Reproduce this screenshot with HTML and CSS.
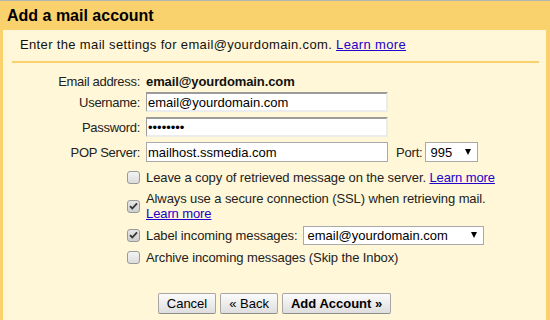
FILE: index.html
```html
<!DOCTYPE html>
<html lang="en">

<head>
    <meta charset="UTF-8">
    <meta name="viewport" content="width=device-width, initial-scale=1.0">
    <title>Add a mail account</title>
    <link rel="stylesheet" href="styles.css">
</head>

<body>
    <div class="dialog">
        <h1 class="dialog-title">Add a mail account</h1>
        <div class="dialog-body">
            <p class="intro">Enter the mail settings for email@yourdomain.com. <a href="#">Learn more</a></p>

            <div class="settings">
                <div class="row row-email">
                    <span class="row-label">Email address:</span>
                    <b>email@yourdomain.com</b>
                </div>
                <div class="row">
                    <label class="row-label" for="username">Username:</label>
                    <input type="text" id="username" class="field field-inset" value="email@yourdomain.com">
                </div>
                <div class="row">
                    <label class="row-label" for="password">Password:</label>
                    <input type="password" id="password" class="field field-inset" value="password">
                </div>
                <div class="row">
                    <label class="row-label" for="popServer">POP Server:</label>
                    <input type="text" id="popServer" class="field" value="mailhost.ssmedia.com">
                    <label class="port-label" for="port">Port:</label>
                    <span class="select-wrap select-port">
                        <select id="port">
                            <option selected>995</option>
                            <option>110</option>
                        </select>
                    </span>
                </div>

                <div class="option option-first">
                    <span class="box"></span>
                    <span class="option-text">Leave a copy of retrieved message on the server. <a href="#">Learn more</a></span>
                </div>
                <div class="option option-tall">
                    <span class="box checked">
                        <svg width="9" height="8" viewBox="0 0 9 8"><path d="M1 4.2 L3.3 6.5 L8 1.3" fill="none" stroke="#333" stroke-width="1.8"/></svg>
                    </span>
                    <span class="option-text">Always use a secure connection (SSL) when retrieving mail. <a href="#">Learn more</a></span>
                </div>
                <div class="option">
                    <span class="box checked">
                        <svg width="9" height="8" viewBox="0 0 9 8"><path d="M1 4.2 L3.3 6.5 L8 1.3" fill="none" stroke="#333" stroke-width="1.8"/></svg>
                    </span>
                    <span class="option-text">Label incoming messages:</span>
                    <span class="select-wrap select-label">
                        <select>
                            <option selected>email@yourdomain.com</option>
                        </select>
                    </span>
                </div>
                <div class="option">
                    <span class="box"></span>
                    <span class="option-text">Archive incoming messages (Skip the Inbox)</span>
                </div>
            </div>

            <div class="actions">
                <button>Cancel</button>
                <button>&laquo; Back</button>
                <button class="primary">Add Account &raquo;</button>
            </div>
        </div>
    </div>
</body>

</html>
```

FILE: styles.css
```css
body {
    margin: 0;
    font-family: "Liberation Sans", Arial, sans-serif;
    font-size: 13px;
    color: #222;
    background-color: #f9d16d;
}

.dialog {
    border-top: 1px solid #b4b4b4;
    padding: 0 4px 0 3px;
    min-height: 319px;
    display: flex;
    flex-direction: column;
}

.dialog-title {
    margin: 0;
    padding-left: 4px;
    height: 29px;
    line-height: 29px;
    font-size: 16px;
    font-weight: bold;
    color: #000;
}

.dialog-body {
    flex: 1;
    background-color: #fff7d7;
}

.intro {
    margin: 0 7px 0 9px;
    padding: 7px 0 8px 8px;
    line-height: 16px;
    letter-spacing: 0.35px;
    border-bottom: 2px solid #f9d16d;
    color: #111;
}

a {
    color: #2200cc;
}

.settings {
    padding: 8px 40px 0 0;
}

.row {
    display: flex;
    align-items: center;
    height: 20px;
    margin-bottom: 5px;
}

.row-email {
    margin-bottom: 1px;
}

.row-label {
    width: 137px;
    margin-right: 6px;
    text-align: right;
    letter-spacing: -0.3px;
    flex-shrink: 0;
}

.row-email b {
    color: #111;
    letter-spacing: -0.1px;
}

.field {
    width: 242px;
    height: 20px;
    box-sizing: border-box;
    margin: 0;
    padding: 0 1px;
    font-family: inherit;
    font-size: 13px;
    color: #000;
    background: #fff;
    border: 1px solid #a9a9a9;
    outline: none;
}

.field-inset {
    border-width: 2px 2px 2px 1px;
    border-color: #9b9b9b #ececec #ececec #9b9b9b;
}

.port-label {
    margin: 0 3px 0 8px;
    letter-spacing: -0.2px;
}

.select-wrap {
    position: relative;
    display: inline-block;
}

.select-wrap select {
    appearance: none;
    -webkit-appearance: none;
    box-sizing: border-box;
    margin: 0;
    padding: 0 0 0 4px;
    font-family: inherit;
    font-size: 13px;
    color: #000;
    background: #fff;
    border: 1px solid #a9a9a9;
    border-radius: 0;
    outline: none;
}

.select-wrap::after {
    content: "";
    position: absolute;
    right: 7px;
    top: 50%;
    margin-top: -3px;
    border-left: 3.5px solid transparent;
    border-right: 3.5px solid transparent;
    border-top: 6px solid #000;
}

.select-port select {
    width: 53px;
    height: 20px;
}

.select-label {
    margin-left: 5px;
}

.select-label select {
    width: 181px;
    height: 19px;
}

.option {
    display: flex;
    align-items: center;
    height: 22px;
}

.option-first {
    margin-top: 4px;
    height: 21px;
}

.option-tall {
    height: 36px;
}

.option-text {
    line-height: 15px;
    letter-spacing: -0.1px;
}

.box {
    width: 13px;
    height: 13px;
    box-sizing: border-box;
    margin: 0 6px 0 124px;
    flex-shrink: 0;
    border: 1px solid #9a9a9a;
    border-radius: 3px;
    background: linear-gradient(#f4f4f4, #dcdcdc);
    display: flex;
    align-items: center;
    justify-content: center;
}

.box.checked {
    background: linear-gradient(#e6e6e6, #cfcfcf);
}

.actions {
    display: flex;
    justify-content: center;
    gap: 4px;
    margin-top: 25px;
}

.actions button {
    height: 21px;
    padding: 0 8px;
    font-family: inherit;
    font-size: 13px;
    color: #000;
    background: linear-gradient(#fbfbfb, #dedede);
    border: 1px solid #a6a6a6;
    border-bottom-color: #8e8e8e;
    border-radius: 2px;
}

.actions button.primary {
    font-weight: bold;
}
```
